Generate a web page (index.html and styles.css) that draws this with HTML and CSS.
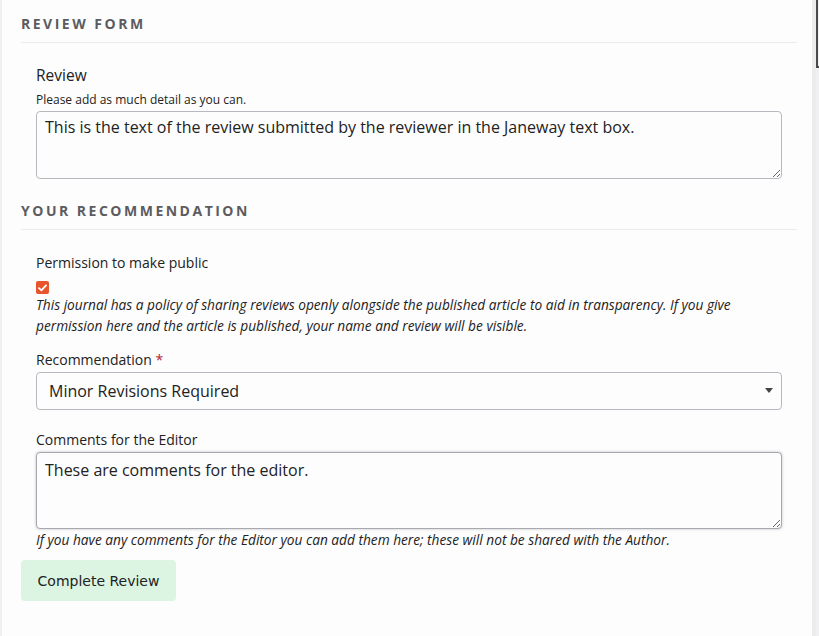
FILE: index.html
```html
<!DOCTYPE html>
<html lang="en">
<head>
<meta charset="utf-8">
<title>Review Form</title>
<link rel="stylesheet" href="styles.css">
</head>
<body>
<div class="page">
  <main class="panel">
    <h2 class="section-title first">Review Form</h2>
    <div class="section-body">
      <label class="field-label" for="review">Review</label>
      <p class="field-hint">Please add as much detail as you can.</p>
      <textarea id="review" class="text-box review-box">This is the text of the review submitted by the reviewer in the Janeway text box.</textarea>
    </div>

    <h2 class="section-title">Your Recommendation</h2>
    <div class="section-body second">
      <div class="label">Permission to make public</div>
      <span class="check" aria-hidden="true">
        <svg width="9" height="8" viewBox="0 0 9 8"><path d="M1 4.2 L3.4 6.4 L8 1.4" fill="none" stroke="#fff" stroke-width="1.8" stroke-linecap="round" stroke-linejoin="round"/></svg>
      </span>
      <p class="help">This journal has a policy of sharing reviews openly alongside the published article to aid in transparency. If you give permission here and the article is published, your name and review will be visible.</p>

      <div class="label rec-label">Recommendation <span class="req">*</span></div>
      <div class="select-wrap">
        <select class="select">
          <option>Minor Revisions Required</option>
        </select>
        <svg class="caret" width="8" height="5" viewBox="0 0 8 5"><path d="M0 0 H8 L4 5 Z" fill="#444"/></svg>
      </div>

      <div class="label comments-label">Comments for the Editor</div>
      <textarea class="text-box comments-box">These are comments for the editor.</textarea>
      <p class="help">If you have any comments for the Editor you can add them here; these will not be shared with the Author.</p>
    </div>

    <button class="submit" type="button">Complete Review</button>
  </main>
  <div class="edge"></div>
</div>
</body>
</html>
```

FILE: styles.css
```css
* { box-sizing: border-box; }

html, body {
  margin: 0;
  padding: 0;
  background: #f0f0f3;
  height: 636px;
  overflow: hidden;
}

body {
  font-family: "Open Sans", "Noto Sans", sans-serif;
  color: #222;
}

.page {
  display: flex;
  height: 636px;
  padding-left: 2px;
  width: 816px;
  position: relative;
}

.panel {
  flex: 1;
  background: #fdfdfd;
  padding: 0 15px 0 19px;
  display: flex;
  flex-direction: column;
  align-items: flex-start;
}

.section-title {
  align-self: stretch;
  margin: 22px 0 0;
  padding: 0 0 8px;
  font-size: 14px;
  line-height: 20px;
  font-weight: 700;
  letter-spacing: 2.5px;
  text-transform: uppercase;
  color: #5c5c60;
  border-bottom: 1px solid #ececec;
}

.section-title.first { margin-top: 14px; }

.section-body {
  align-self: stretch;
  padding: 22px 15px 0;
  display: flex;
  flex-direction: column;
  align-items: flex-start;
}

.section-body.second { padding-top: 23px; }

.field-label {
  font-size: 15.5px;
  line-height: 20px;
  color: #222;
}

.field-hint {
  margin: 7px 0 3px;
  font-size: 12px;
  line-height: 16px;
  font-stretch: 93%;
}

.text-box {
  display: block;
  width: 100%;
  font-family: "Open Sans", "Noto Sans", sans-serif;
  font-size: 16px;
  line-height: 24px;
  color: #222;
  background: #fdfdfd;
  border: 1px solid #b8b8c0;
  border-radius: 4px;
  padding: 3px 8px;
  margin: 0;
  resize: vertical;
}

.review-box { height: 68px; }

.comments-box {
  height: 77px;
  border-color: #a8a8b0;
  box-shadow: 0 0 3px rgba(0, 0, 0, 0.25);
  padding-top: 5px;
}

.label {
  font-size: 14px;
  line-height: 20px;
}

.check {
  margin-top: 8px;
  width: 13px;
  height: 13px;
  border-radius: 2px;
  background: #e8542b;
  display: flex;
  align-items: center;
  justify-content: center;
}

.help {
  margin: 0;
  font-size: 13.7px;
  line-height: 21px;
  font-style: italic;
  color: #222;
}

.rec-label { margin-top: 14px; }

.req { color: #b0252a; }

.select-wrap {
  position: relative;
  width: 100%;
  margin-top: 2px;
}

.select {
  display: block;
  width: 100%;
  height: 38px;
  appearance: none;
  -webkit-appearance: none;
  font-family: "Open Sans", "Noto Sans", sans-serif;
  font-size: 16px;
  color: #222;
  background: #fdfdfd;
  border: 1px solid #b8b8c0;
  border-radius: 4px;
  padding: 0 12px;
  margin: 0;
}

.caret {
  position: absolute;
  right: 9px;
  top: 16px;
}

.comments-label {
  margin-top: 20px;
  margin-bottom: 2px;
}

.submit {
  margin-top: 10px;
  width: 155px;
  height: 41px;
  border: none;
  border-radius: 4px;
  background: #dcf4e2;
  color: #222;
  font-family: "DejaVu Sans", sans-serif;
  font-size: 14px;
  padding: 0;
}

.edge {
  width: 4px;
  background: #ececef;
}

.edge::after {
  content: "";
  position: absolute;
  left: 816px;
  top: -2px;
  width: 10px;
  height: 68px;
  border-left: 2px solid #4a4a4a;
  border-bottom: 2px solid #4a4a4a;
}
```
